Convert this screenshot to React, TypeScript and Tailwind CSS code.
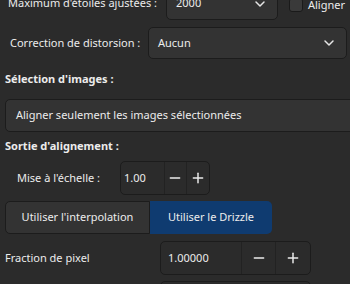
import { ChevronDown, Minus, Plus } from "lucide-react";

const font = { fontFamily: '"Noto Sans", "Open Sans", sans-serif' };

function Select({ value, className }: { value: string; className: string }) {
  return (
    <div
      className={`flex items-center justify-between rounded-[5px] border border-[#1c1c1c] bg-[#333333] pl-[9px] pr-[9px] ${className}`}
    >
      <span>{value}</span>
      <ChevronDown size={16} strokeWidth={2.2} className="text-[#e6e6e6]" />
    </div>
  );
}

function SpinBox({
  value,
  className,
  field,
  btn,
}: {
  value: string;
  className: string;
  field: string;
  btn: string;
}) {
  return (
    <div className={`flex rounded-[5px] border border-[#1c1c1c] bg-[#2b2b2b] ${className}`}>
      <div className={`flex items-center pl-[3px] ${field}`}>{value}</div>
      <div className={`flex items-center justify-center border-l border-[#222222] ${btn}`}>
        <Minus size={16} strokeWidth={2.2} />
      </div>
      <div className={`flex items-center justify-center border-l border-[#222222] ${btn}`}>
        <Plus size={16} strokeWidth={2.2} />
      </div>
    </div>
  );
}

export default function App() {
  return (
    <div
      style={font}
      className="h-[284px] w-[350px] overflow-hidden whitespace-nowrap bg-[#2b2b2b] text-[11px] text-[#ececec]"
    >
      <div className="-mt-[13px] flex flex-col">
        <div className="flex h-[33px] items-center">
          <span className="w-[166px] pl-[8px]">Maximum d'étoiles ajustées :</span>
          <Select value="2000" className="h-[33px] w-[112px]" />
          <div className="ml-[11px] h-[14px] w-[14px] self-start mt-[11px] rounded-[3px] border border-[#1a1a1a] bg-[#3a3a3a]" />
          <span className="ml-[5px] mt-[10px] self-start">Aligner</span>
        </div>

        <div className="mt-[7px] flex h-[32px] items-center">
          <span className="w-[148px] pl-[10px]">Correction de distorsion :</span>
          <Select value="Aucun" className="h-[32px] w-[199px]" />
        </div>

        <div className="mt-[10px] h-[20px] pl-[5px] font-bold leading-[20px]">Sélection d'images :</div>

        <div className="mt-[10px] flex h-[33px] w-[360px] items-center rounded-[5px] border border-[#1c1c1c] bg-[#333333] ml-[5px] pl-[10px]">
          Aligner seulement les images sélectionnées
        </div>

        <div className="mt-[4px] h-[20px] pl-[5px] font-bold leading-[20px]">Sortie d'alignement :</div>

        <div className="mt-[5px] flex h-[34px] items-center">
          <span className="w-[120px] pl-[17px]">Mise à l'échelle :</span>
          <SpinBox value="1.00" className="h-[34px] w-[90px]" field="w-[43px]" btn="w-[23px]" />
        </div>

        <div className="ml-[5px] mt-[6px] flex h-[33px]">
          <div className="flex w-[145px] items-center justify-center rounded-l-[5px] border border-[#1c1c1c] bg-[#333333]">
            Utiliser l'interpolation
          </div>
          <div className="flex w-[122px] items-center justify-center rounded-r-[5px] bg-[#0f3b70]">
            Utiliser le Drizzle
          </div>
        </div>

        <div className="mt-[7px] flex h-[34px] items-center">
          <span className="w-[160px] pl-[5px]">Fraction de pixel</span>
          <SpinBox value="1.00000" className="h-[34px] w-[151px]" field="w-[81px] pl-[7px]" btn="w-[35px]" />
        </div>

        <div className="ml-[160px] mt-[6px] h-[34px] w-[151px] rounded-[5px] border border-[#1c1c1c] bg-[#2b2b2b]" />
      </div>
    </div>
  );
}
